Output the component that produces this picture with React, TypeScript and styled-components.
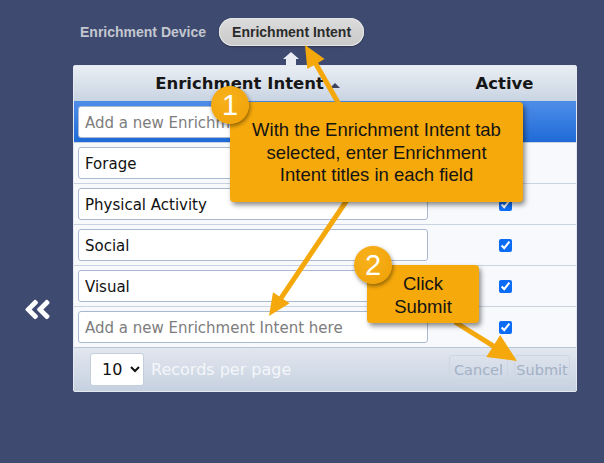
import React from 'react';
import styled, { createGlobalStyle } from 'styled-components';
import { FaAngleDoubleLeft } from 'react-icons/fa';

const GlobalStyle = createGlobalStyle`
  html, body {
    margin: 0;
    padding: 0;
    background: #3e4a6f;
  }
  * {
    box-sizing: border-box;
  }
`;

const intents = [
  { title: '', selected: true },
  { title: 'Forage' },
  { title: 'Physical Activity' },
  { title: 'Social' },
  { title: 'Visual' },
  { title: '' },
];

type Arrow = { x1: number; y1: number; x2: number; y2: number; len: number; half: number };

// callout arrows: tail -> tip
const arrows: Arrow[] = [
  { x1: 340, y1: 106, x2: 305, y2: 45, len: 22, half: 10 },
  { x1: 347, y1: 200, x2: 269, y2: 316, len: 22, half: 10 },
  { x1: 455, y1: 322, x2: 517, y2: 361, len: 28, half: 13 },
];

const headPoints = (a: Arrow) => {
  const dx = a.x2 - a.x1;
  const dy = a.y2 - a.y1;
  const l = Math.hypot(dx, dy);
  const ux = dx / l;
  const uy = dy / l;
  const bx = a.x2 - ux * a.len;
  const by = a.y2 - uy * a.len;
  return `${a.x2},${a.y2} ${bx - uy * a.half},${by + ux * a.half} ${bx + uy * a.half},${by - ux * a.half}`;
};

const shaftEnd = (a: Arrow) => {
  const dx = a.x2 - a.x1;
  const dy = a.y2 - a.y1;
  const l = Math.hypot(dx, dy);
  return { x: a.x2 - (dx / l) * (a.len - 4), y: a.y2 - (dy / l) * (a.len - 4) };
};

const App = () => {
  return (
    <Page>
      <GlobalStyle />
      <TabBar>
        <Tab>Enrichment Device</Tab>
        <Tab $active>Enrichment Intent</Tab>
      </TabBar>
      <Pointer width="16" height="13" viewBox="0 0 16 13">
        <path d="M8 0 L16 7 L13 7 L13 13 L3 13 L3 7 L0 7 Z" fill="#e9edf3" />
      </Pointer>
      <Body>
        <BackColumn>
          <FaAngleDoubleLeft size={31} color="#ffffff" />
        </BackColumn>
        <Panel>
          <HeaderRow>
            <HeadCell $name>
              Enrichment Intent <SortCaret />
            </HeadCell>
            <HeadCell>Active</HeadCell>
          </HeaderRow>
          {intents.map((item, i) => (
            <Row key={i} $selected={item.selected}>
              <NameCell>
                <TitleInput
                  readOnly
                  value={item.title}
                  placeholder="Add a new Enrichment Intent here"
                />
              </NameCell>
              <ActiveCell>
                {!item.selected && <Check type="checkbox" checked readOnly />}
              </ActiveCell>
            </Row>
          ))}
          <Footer>
            <PageSize defaultValue="10">
              <option value="10">10</option>
              <option value="25">25</option>
              <option value="50">50</option>
            </PageSize>
            <FooterLabel>Records per page</FooterLabel>
            <Actions>
              <ActionButton disabled $width={59}>Cancel</ActionButton>
              <ActionButton disabled $width={56}>Submit</ActionButton>
            </Actions>
          </Footer>
        </Panel>
      </Body>

      <ArrowLayer width="604" height="463" viewBox="0 0 604 463">
        {arrows.map((a, i) => {
          const end = shaftEnd(a);
          return (
            <g key={i}>
              <line x1={a.x1} y1={a.y1} x2={end.x} y2={end.y} stroke="#f5a80c" strokeWidth="5" />
              <polygon points={headPoints(a)} fill="#f5a80c" />
            </g>
          );
        })}
      </ArrowLayer>

      <Callout $left={230} $top={102} $width={293} $height={100}>
        With the Enrichment Intent tab
        <br />
        selected, enter Enrichment
        <br />
        Intent titles in each field
      </Callout>
      <Badge $x={230} $y={105}>1</Badge>

      <Callout $left={367} $top={265} $width={112} $height={58} $pad={8}>
        Click
        <br />
        Submit
      </Callout>
      <Badge $x={373} $y={265}>2</Badge>
    </Page>
  );
};

export default App;

const Page = styled.div`
  position: relative;
  width: 604px;
  height: 463px;
  background: #3e4a6f;
  display: flex;
  flex-direction: column;
  overflow: hidden;
`;

const TabBar = styled.div`
  display: flex;
  align-items: center;
  padding: 18px 0 0 67px;
`;

const Tab = styled.div<{ $active?: boolean }>`
  height: 28px;
  display: flex;
  align-items: center;
  padding: 0 13px;
  font-family: 'Liberation Sans', Arial, sans-serif;
  font-size: 14px;
  font-weight: 700;
  color: ${({ $active }) => ($active ? '#2b2b2b' : '#c4c7cf')};
  border-radius: 14px;
  background: ${({ $active }) => ($active ? 'linear-gradient(#dcdcdc, #c9c9c9)' : 'transparent')};
  box-shadow: ${({ $active }) => ($active ? 'inset 0 0 0 1px #e6e6e6, 0 1px 2px rgba(0,0,0,0.3)' : 'none')};
`;

const Pointer = styled.svg`
  display: block;
  margin: 6px 0 0 283px;
`;

const Body = styled.div`
  display: flex;
  align-items: flex-start;
`;

const BackColumn = styled.div`
  width: 73px;
  padding: 229px 0 0 22px;
  display: flex;
`;

const Panel = styled.div`
  width: 504px;
  border: 1px solid #e4e9f0;
  border-radius: 2px;
  background: #f7f9fc;
  display: flex;
  flex-direction: column;
`;

const HeaderRow = styled.div`
  height: 35px;
  display: flex;
  background: linear-gradient(#e9eef4, #c9d4e2);
`;

const HeadCell = styled.div<{ $name?: boolean }>`
  width: ${({ $name }) => ($name ? '359px' : 'auto')};
  flex: ${({ $name }) => ($name ? 'none' : '1')};
  display: flex;
  align-items: center;
  justify-content: center;
  gap: 6px;
  padding-right: ${({ $name }) => ($name ? '12px' : '0')};
  font-family: 'DejaVu Sans', Verdana, sans-serif;
  font-size: 16.5px;
  font-weight: 700;
  color: #161616;
`;

const SortCaret = styled.span`
  width: 0;
  height: 0;
  margin-top: 3px;
  border-left: 5px solid transparent;
  border-right: 5px solid transparent;
  border-bottom: 5px solid #3a4460;
`;

const Row = styled.div<{ $selected?: boolean }>`
  height: 41px;
  display: flex;
  align-items: center;
  border-top: 1px solid ${({ $selected }) => ($selected ? '#4b8be6' : '#c9d3e1')};
  background: ${({ $selected }) => ($selected ? 'linear-gradient(#4d8de8, #1f6ad7)' : '#f7f9fc')};
`;

const NameCell = styled.div`
  width: 359px;
  padding-left: 4px;
`;

const TitleInput = styled.input`
  width: 350px;
  height: 32px;
  padding: 1px 6px 0;
  border: 1px solid #a9b9d2;
  border-radius: 3px;
  background: #ffffff;
  font-family: 'DejaVu Sans', Verdana, sans-serif;
  font-size: 15px;
  color: #111;
  outline: none;

  &::placeholder {
    color: #7d7d7d;
  }
`;

const ActiveCell = styled.div`
  flex: 1;
  display: flex;
  justify-content: center;
`;

const Check = styled.input`
  width: 13px;
  height: 13px;
  margin: 0 0 0 2px;
  accent-color: #0b6cf5;
`;

const Footer = styled.div`
  height: 44px;
  display: flex;
  align-items: center;
  padding: 0 6px 0 16px;
  border-top: 1px solid #b9c6d8;
  background: linear-gradient(#e2e7ef, #c6d1e0);
`;

const PageSize = styled.select`
  width: 54px;
  height: 33px;
  padding: 0 2px 0 7px;
  border: 1px solid #c3cddb;
  border-radius: 3px;
  background: #ffffff;
  font-family: 'DejaVu Sans', Verdana, sans-serif;
  font-size: 16px;
  color: #111;
`;

const FooterLabel = styled.span`
  margin-left: 7px;
  font-family: 'DejaVu Sans', Verdana, sans-serif;
  font-size: 16px;
  color: #f4f6fa;
`;

const Actions = styled.div`
  margin-left: auto;
  display: flex;
  gap: 6px;
`;

const ActionButton = styled.button<{ $width: number }>`
  width: ${({ $width }) => $width}px;
  height: 29px;
  padding: 0;
  border: 1px solid #cdd6e3;
  border-radius: 3px;
  background: transparent;
  font-family: 'DejaVu Sans', Verdana, sans-serif;
  font-size: 14.5px;
  color: #a3b1c6;
`;

const ArrowLayer = styled.svg`
  position: absolute;
  left: 0;
  top: 0;
  pointer-events: none;
`;

const Callout = styled.div<{ $left: number; $top: number; $width: number; $height: number; $pad?: number }>`
  position: absolute;
  left: ${({ $left }) => $left}px;
  top: ${({ $top }) => $top}px;
  width: ${({ $width }) => $width}px;
  height: ${({ $height }) => $height}px;
  padding-top: ${({ $pad }) => $pad ?? 17}px;
  background: #f6a90b;
  border-radius: 4px;
  box-shadow: 2px 3px 5px rgba(0, 0, 0, 0.45);
  font-family: 'Liberation Sans', Arial, sans-serif;
  font-size: 18.5px;
  line-height: 22.5px;
  color: #141414;
  text-align: center;
`;

const Badge = styled.div<{ $x: number; $y: number }>`
  position: absolute;
  left: ${({ $x }) => $x - 19}px;
  top: ${({ $y }) => $y - 19}px;
  width: 38px;
  height: 38px;
  border-radius: 50%;
  background: radial-gradient(circle at 40% 35%, #f8b21c, #ef9f05);
  box-shadow: 1px 2px 4px rgba(0, 0, 0, 0.45);
  display: flex;
  align-items: center;
  justify-content: center;
  font-family: 'Liberation Sans', Arial, sans-serif;
  font-size: 29px;
  color: #ffffff;
`;
